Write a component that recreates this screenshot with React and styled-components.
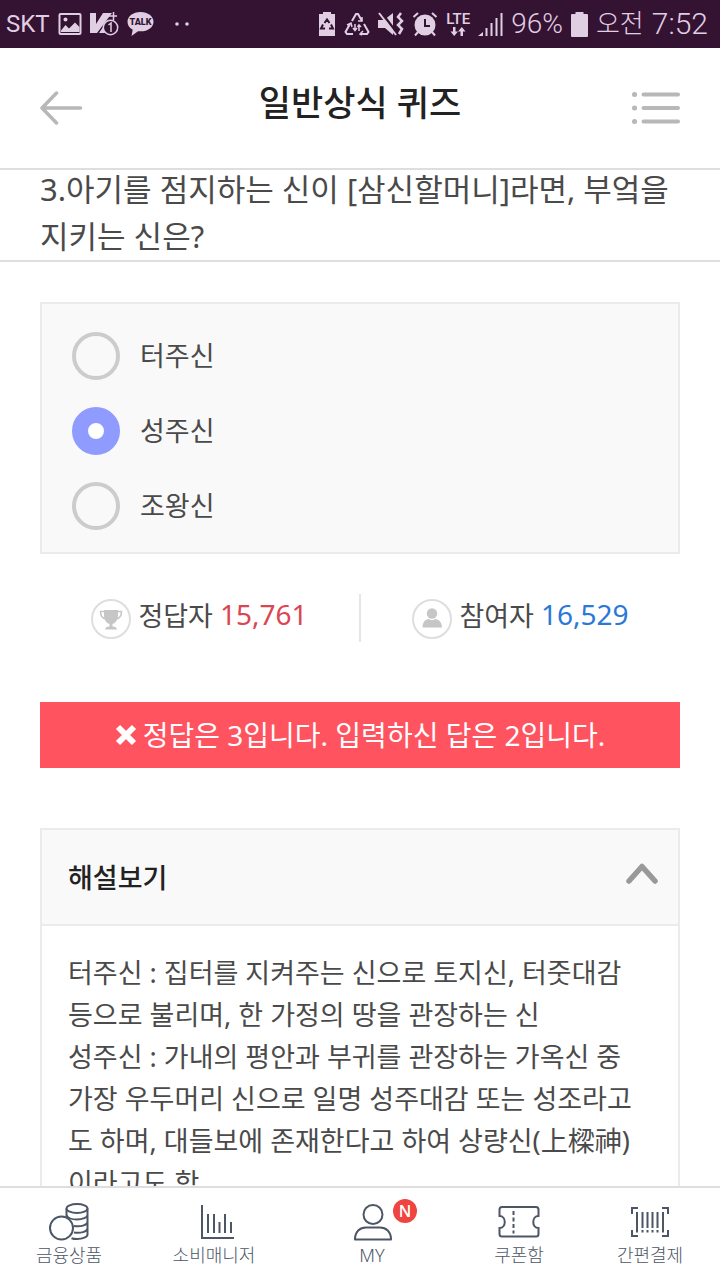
import React, { useState } from "react";
import styled, { createGlobalStyle } from "styled-components";

const GlobalStyle = createGlobalStyle`
  *, *::before, *::after { box-sizing: border-box; }
  body {
    margin: 0;
    background: #fff;
    color: #4a4a4a;
    font-family: "Noto Sans", "Noto Sans CJK KR", sans-serif;
  }
  button, input { font: inherit; color: inherit; }
`;

const Screen = styled.div`
  display: flex;
  flex-direction: column;
  height: 100vh;
`;

const StatusBar = styled.div`
  flex: none;
  display: flex;
  align-items: center;
  justify-content: space-between;
  height: 48px;
  padding: 0 12px 0 6px;
  background: #341232;
  color: #e0cfe2;
  font-family: Roboto, "Noto Sans CJK KR", sans-serif;
`;

const StatusGroup = styled.div`
  display: flex;
  align-items: center;
  gap: 8px;
  white-space: nowrap;
`;

const StatusText = styled.span`
  font-size: ${(p) => p.$size}px;
  font-weight: ${(p) => p.$weight || 300};
  line-height: 32px;
`;

const Network = styled.span`
  display: flex;
  flex-direction: column;
  align-items: center;
  font-size: 15px;
  font-weight: 500;
  line-height: 15px;
`;

const Header = styled.header`
  flex: none;
  display: flex;
  align-items: center;
  justify-content: space-between;
  height: 122px;
  padding: 0 40px;
  border-bottom: 2px solid #dedede;
`;

const Title = styled.h1`
  margin: 0;
  padding-bottom: 10px;
  color: #222;
  font-size: 35px;
  font-weight: 500;
  line-height: 48px;
`;

const IconButton = styled.button`
  display: flex;
  padding: 0;
  border: 0;
  background: none;
  cursor: pointer;
`;

const Content = styled.main`
  flex: 1;
  min-height: 0;
  overflow-y: auto;
  scrollbar-width: none;
`;

const Question = styled.h2`
  margin: -4px 0 0;
  padding: 0 40px;
  border-bottom: 2px solid #dedede;
  font-size: 31px;
  font-weight: 400;
  line-height: 47px;
`;

const Body = styled.div`
  padding: 40px 40px 0;
`;

const Options = styled.fieldset`
  display: flex;
  flex-direction: column;
  gap: 27px;
  margin: 0;
  padding: 28px 30px 22px;
  border: 2px solid #ebebeb;
  background: #f9f9f9;
`;

const Option = styled.label`
  display: flex;
  align-items: center;
  gap: 20px;
  font-size: 27px;
  line-height: 48px;
  cursor: pointer;
`;

const Radio = styled.input`
  appearance: none;
  width: 48px;
  height: 48px;
  margin: 0;
  border: 4px solid #ccc;
  border-radius: 50%;

  &:checked {
    border: 16px solid #8f9bff;
    background: #fff;
  }
`;

const Stats = styled.div`
  display: flex;
  align-items: center;
  height: 48px;
  margin: 40px 0 60px;
`;

const Stat = styled.div`
  flex: 1;
  display: flex;
  align-items: center;
  justify-content: center;
  gap: 7px;
  height: 48px;
  padding-bottom: 4px;
  font-size: 27px;
  line-height: 40px;
  white-space: nowrap;

  & + & { border-left: 2px solid #e6e6e6; }
  svg { margin-top: 6px; }
`;

const Count = styled.span`
  padding-bottom: 4px;
  color: ${(p) => p.$color};
  font-size: 28px;
`;

const Result = styled.div`
  display: flex;
  align-items: center;
  justify-content: center;
  gap: 6px;
  height: 66px;
  margin-bottom: 60px;
  background: #ff5360;
  color: #fff;
  font-size: 28px;
  line-height: 40px;
`;

const Panel = styled.section`
  border: 2px solid #ebebeb;
`;

const PanelToggle = styled.button`
  display: flex;
  align-items: center;
  justify-content: space-between;
  width: 100%;
  height: 96px;
  padding: 0 19px 2px 26px;
  border: 0;
  border-bottom: 2px solid #ebebeb;
  background: #f9f9f9;
  color: #222;
  font-size: 27px;
  font-weight: 500;
  cursor: pointer;

  svg { margin-bottom: 4px; }
`;

const Explanation = styled.div`
  padding: 26px 36px 26px 26px;
  font-size: 27px;
  line-height: 42px;
  word-break: break-all;

  p { margin: 0; }
`;

const Nav = styled.nav`
  flex: none;
  display: grid;
  grid-template-columns: 138fr 152fr 164fr 130fr 132fr;
  height: 94px;
  padding: 14px 4px 0 0;
  border-top: 2px solid #dedede;
  background: #fff;
`;

const NavLink = styled.a`
  display: flex;
  flex-direction: column;
  align-items: center;
  color: #4d5666;
  font-size: 18px;
  font-weight: 300;
  line-height: 26px;
  text-decoration: none;
`;

const NavIcon = styled.span`
  position: relative;
  display: flex;
  height: 40px;
`;

const Badge = styled.span`
  position: absolute;
  top: -3px;
  right: -25px;
  width: 24px;
  height: 24px;
  border-radius: 50%;
  background: #ee4540;
  color: #fff;
  font-family: "Open Sans", sans-serif;
  font-size: 16px;
  font-weight: 600;
  line-height: 24px;
  text-align: center;
`;

const TalkSvg = styled.svg`
  font-family: Roboto, sans-serif;
  font-size: 9px;
  font-weight: 900;
`;

const MoreSvg = styled.svg`
  margin-left: 12px;
`;

const ImageIcon = () => (
  <svg width="24" height="24" viewBox="0 0 24 24" fill="none" stroke="currentColor" strokeWidth="2">
    <rect x="1.5" y="2" width="21" height="20" rx="1" />
    <circle cx="7.5" cy="7.5" r="2" fill="currentColor" stroke="none" />
    <path d="M3 18.500 7.500 13l3.500 3.500 6-6L21.500 15v5H3z" fill="currentColor" stroke="none" />
  </svg>
);

const VaccineIcon = () => (
  <svg width="29" height="26" viewBox="0 0 29 26" fill="none" stroke="currentColor">
    <path d="M0 2h6v11L13 2h9L7 22H0z" fill="currentColor" stroke="none" />
    <path d="M9 22l4-6 2 6z" fill="currentColor" stroke="none" />
    <path d="M19 5h8M23.500 1v8" strokeWidth="1.500" />
    <circle cx="20.500" cy="16.500" r="7.200" fill="#341232" strokeWidth="1.500" />
    <path d="M18.500 14l2.500-2v9" strokeWidth="1.500" />
  </svg>
);

const TalkIcon = () => (
  <TalkSvg width="27" height="26" viewBox="0 0 27 26">
    <path d="M13.500 1C6 1 .5 5.300.5 10.700c0 3.500 2 6.400 5.200 8.100L4.500 25l6.500-4.800c9 1 15.500-3.500 15.500-9.500C26.500 5.300 21 1 13.500 1z" fill="currentColor" />
    <text x="13.500" y="14" textAnchor="middle" fill="#341232">TALK</text>
  </TalkSvg>
);

const MoreDots = () => (
  <MoreSvg width="16" height="6" viewBox="0 0 16 6" fill="currentColor">
    <circle cx="3" cy="3" r="1.800" />
    <circle cx="13" cy="3" r="1.800" />
  </MoreSvg>
);

const BatteryRecycleIcon = () => (
  <svg width="18" height="26" viewBox="0 0 18 26" fill="currentColor">
    <path d="M5 1h8v2h4v22H1V3h4z" />
    <path d="M6.500 12 9 8.500l2.500 3.500M13 13.500l2 4h-4M7 17.500H3l2-4" fill="none" stroke="#341232" strokeWidth="2" />
  </svg>
);

const RecycleIcon = () => (
  <svg width="26" height="24" viewBox="0 0 26 24" fill="none" stroke="currentColor" strokeWidth="2">
    <path d="M8 9 12 2h2l4 7M20 12l4.500 8-1.500 2h-6M9 22H3l-1.500-2L6 12" />
    <path d="M3 13l4-2 1 4M18 5v4h-4M19 19l-3 3 2 1" strokeWidth="1.500" />
    <path d="M11 12v6M9 16l2 2.500 2-2.500M15 19v-6M13.500 15l1.500-2 2 2" strokeWidth="1.500" />
  </svg>
);

const MuteIcon = () => (
  <svg width="26" height="26" viewBox="0 0 26 26" fill="currentColor">
    <path d="M0 9h6l9-7v22l-8-7H0z" />
    <path d="M3 1 19 22" stroke="#341232" strokeWidth="2.500" />
    <path d="M1 2 18 24" stroke="currentColor" strokeWidth="2" />
    <path d="M23 2l-3 4 4 4-4 4 4 4-3 5" fill="none" stroke="currentColor" strokeWidth="2.500" />
  </svg>
);

const AlarmIcon = () => (
  <svg width="26" height="26" viewBox="0 0 26 26" fill="none" stroke="currentColor" strokeWidth="2">
    <circle cx="13" cy="14" r="10.500" fill="currentColor" stroke="none" />
    <path d="M1.500 6 6 2M24.500 6 20 2M6 21l-3 3.500M20 21l3 3.500" />
    <path d="M13 8v7h5" stroke="#341232" />
  </svg>
);

const DataArrows = () => (
  <svg width="16" height="9" viewBox="0 0 16 9" fill="currentColor">
    <path d="M3 0h2.500v4.500H8L4.200 9 .5 4.500H3zM10.500 9H13V4.500h2.500L11.800 0 8 4.500h2.500z" />
  </svg>
);

const SignalIcon = () => (
  <svg width="25" height="25" viewBox="0 0 25 25" fill="none" stroke="currentColor" strokeWidth="2">
    <path d="M0 24h5v-4z" fill="currentColor" stroke="none" />
    <path d="M8.500 24v-8M13.500 24V11M18.500 24V6M23.500 24V1" />
  </svg>
);

const BatteryIcon = () => (
  <svg width="17" height="25" viewBox="0 0 17 25" fill="currentColor">
    <path d="M4.500 0h8v2H16a1 1 0 0 1 1 1v21a1 1 0 0 1-1 1H1a1 1 0 0 1-1-1V3a1 1 0 0 1 1-1h3.500z" />
  </svg>
);

const BackIcon = () => (
  <svg width="48" height="36" viewBox="0 0 48 36" fill="none" stroke="#b8b8b8" strokeWidth="3.500" strokeLinecap="round" strokeLinejoin="round">
    <path d="M16.500 3 2 18l14.500 15M2 18h38.500" />
  </svg>
);

const ListIcon = () => (
  <svg width="48" height="34" viewBox="0 0 48 34" fill="none" stroke="#b8b8b8" strokeWidth="4" strokeLinecap="round">
    <path d="M11.500 3.500H46M11.500 17H46M11.500 30.500H46" />
    <path d="M2.500 3.500h.1M2.500 17h.1M2.500 30.500h.1" strokeWidth="5" />
  </svg>
);

const TrophyIcon = () => (
  <svg width="40" height="40" viewBox="0 0 40 40">
    <circle cx="20" cy="20" r="19" fill="#fff" stroke="#dedede" strokeWidth="2" />
    <path d="M13 11h14v5c0 5-2.500 8-5.500 9v2.500c3 0 4 1 4.500 3H14c.5-2 1.500-3 4.500-3V25c-3-1-5.500-4-5.500-9z" fill="#c6c6c6" />
    <path d="M13 12.500H9.500c0 4.500 2 7 5.500 7.500M27 12.500h3.500c0 4.500-2 7-5.500 7.500" fill="none" stroke="#c6c6c6" strokeWidth="1.500" />
  </svg>
);

const PersonIcon = () => (
  <svg width="40" height="40" viewBox="0 0 40 40">
    <circle cx="20" cy="20" r="19" fill="#fff" stroke="#dedede" strokeWidth="2" />
    <circle cx="20" cy="14.500" r="5.200" fill="#c6c6c6" />
    <path d="M10.500 28.500c0-5 2-7.500 6-8.500 2 1.500 5 1.500 7 0 4 1 6.500 3.500 6.500 8.500z" fill="#c6c6c6" />
  </svg>
);

const CrossIcon = () => (
  <svg width="22" height="22" viewBox="0 0 22 22" stroke="#fff" strokeWidth="6">
    <path d="M3 3l16 16M19 3 3 19" />
  </svg>
);

const ChevronUpIcon = ({ open }) => (
  <svg width="34" height="24" viewBox="0 0 34 24" fill="none" stroke="#999" strokeWidth="5.500" strokeLinecap="round" strokeLinejoin="round">
    <path d={open ? "M4 19 17 4.500 30 19" : "M4 4.500 17 19 30 4.500"} />
  </svg>
);

const lineProps = { fill: "none", stroke: "#4d5666", strokeWidth: 2, height: 40 };

const CoinsIcon = () => (
  <svg width="40" viewBox="0 0 40 40" {...lineProps}>
    <ellipse cx="28" cy="6.500" rx="10.500" ry="4.500" />
    <path d="M17.500 6.500V16M38.500 6.500v26c0 2.500-4.700 4.500-10.500 4.500-2 0-4-.3-5.500-.8M17.500 13c1 2.500 5 4.500 10.500 4.500s10.500-2 10.500-4.500M25 24c6 1 13.500-.5 13.500-4.500M25 30.500c6 1 13.500-.5 13.500-4.500" />
    <circle cx="12.500" cy="26" r="11.500" fill="#fff" />
  </svg>
);

const ChartIcon = () => (
  <svg width="40" viewBox="0 0 40 40" {...lineProps}>
    <path d="M8 3v33h32M14 12v19M20 12v19M25.500 20v11M31 12v19M37 20v11" />
  </svg>
);

const ProfileIcon = () => (
  <svg width="40" viewBox="0 0 40 40" {...lineProps}>
    <circle cx="21" cy="12.500" r="9.500" />
    <path d="M3 37.500c0-8 5-12 11-12h14c6 0 11 4 11 12z" strokeLinejoin="round" />
  </svg>
);

const CouponIcon = () => (
  <svg width="42" viewBox="0 0 42 40" {...lineProps}>
    <path d="M4 5h34c1.500 0 2.500 1 2.500 2.500V14c-7 0-7 12 0 12v6c0 1.500-1 2.500-2.500 2.500H4c-1.500 0-2.500-1-2.500-2.500v-6c7 0 7-12 0-12V7.500C1.500 6 2.500 5 4 5z" />
    <path d="M15.500 9v4M15.500 15.500v4M15.500 22v4M15.500 28.500v3" />
  </svg>
);

const BarcodeIcon = () => (
  <svg width="40" viewBox="0 0 40 40" {...lineProps}>
    <path d="M2 12V6h6M32 6h6v6M2 28v6h6M32 34h6v-6" />
    <path d="M7 10v20.500M12.500 10v16M12.500 28v2.500M17.500 10v16M17.500 28v2.500M22.500 10v16M22.500 28v2.500M27.500 10v16M27.500 28v2.500M33 10v20.500" />
  </svg>
);

const choices = ["터주신", "성주신", "조왕신"];

const menu = [
  { label: "금융상품", icon: <CoinsIcon /> },
  { label: "소비매니저", icon: <ChartIcon /> },
  { label: "MY", icon: <ProfileIcon />, badge: "N" },
  { label: "쿠폰함", icon: <CouponIcon /> },
  { label: "간편결제", icon: <BarcodeIcon /> },
];

export default function App() {
  const [answer, setAnswer] = useState("성주신");
  const [open, setOpen] = useState(true);

  return (
    <>
      <GlobalStyle />
      <Screen>
        <StatusBar>
          <StatusGroup>
            <StatusText $size={24} $weight={400}>SKT</StatusText>
            <ImageIcon />
            <VaccineIcon />
            <TalkIcon />
            <MoreDots />
          </StatusGroup>
          <StatusGroup>
            <BatteryRecycleIcon />
            <RecycleIcon />
            <MuteIcon />
            <AlarmIcon />
            <Network>
              LTE
              <DataArrows />
            </Network>
            <SignalIcon />
            <StatusText $size={28}>96%</StatusText>
            <BatteryIcon />
            <StatusText $size={26}>오전</StatusText>
            <StatusText $size={30}>7:52</StatusText>
          </StatusGroup>
        </StatusBar>

        <Header>
          <IconButton type="button" aria-label="뒤로"><BackIcon /></IconButton>
          <Title>일반상식 퀴즈</Title>
          <IconButton type="button" aria-label="목록"><ListIcon /></IconButton>
        </Header>

        <Content>
          <Question>3.아기를 점지하는 신이 [삼신할머니]라면, 부엌을 지키는 신은?</Question>
          <Body>
            <Options aria-label="보기">
              {choices.map((choice) => (
                <Option key={choice}>
                  <Radio
                    type="radio"
                    name="answer"
                    value={choice}
                    checked={answer === choice}
                    onChange={() => setAnswer(choice)}
                  />
                  {choice}
                </Option>
              ))}
            </Options>

            <Stats>
              <Stat>
                <TrophyIcon />
                정답자 <Count $color="#dc4552">15,761</Count>
              </Stat>
              <Stat>
                <PersonIcon />
                참여자 <Count $color="#2a78d8">16,529</Count>
              </Stat>
            </Stats>

            <Result role="status">
              <CrossIcon />
              정답은 3입니다. 입력하신 답은 2입니다.
            </Result>

            <Panel>
              <PanelToggle type="button" aria-expanded={open} onClick={() => setOpen(!open)}>
                해설보기
                <ChevronUpIcon open={open} />
              </PanelToggle>
              {open && (
                <Explanation>
                  <p>터주신 : 집터를 지켜주는 신으로 토지신, 터줏대감 등으로 불리며, 한 가정의 땅을 관장하는 신</p>
                  <p>성주신 : 가내의 평안과 부귀를 관장하는 가옥신 중 가장 우두머리 신으로 일명 성주대감 또는 성조라고도 하며, 대들보에 존재한다고 하여 상량신(上樑神)이라고도 함</p>
                </Explanation>
              )}
            </Panel>
          </Body>
        </Content>

        <Nav>
          {menu.map((item) => (
            <NavLink key={item.label} href="#">
              <NavIcon>
                {item.icon}
                {item.badge && <Badge>{item.badge}</Badge>}
              </NavIcon>
              {item.label}
            </NavLink>
          ))}
        </Nav>
      </Screen>
    </>
  );
}
